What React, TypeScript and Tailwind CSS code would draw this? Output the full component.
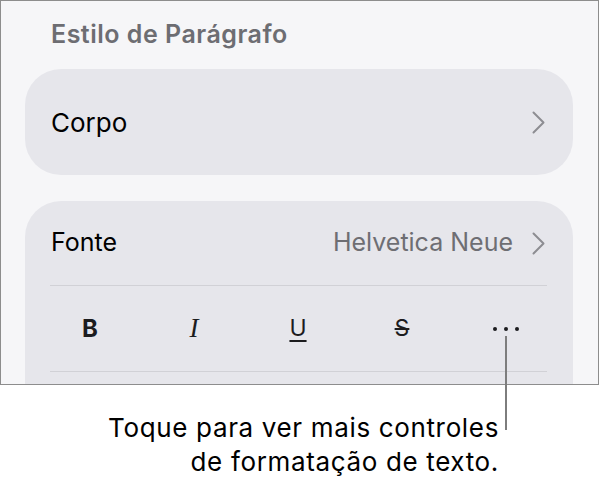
import React from "react";

const Chevron = () => (
  <svg width="13" height="23" viewBox="0 0 13 23" fill="none" className="shrink-0">
    <path d="M1.5 1.5 L11.5 11.5 L1.5 21.5" stroke="#8d8d92" strokeWidth="2" strokeLinecap="round" strokeLinejoin="round" />
  </svg>
);

const StyleButton = ({ children }: { children: React.ReactNode }) => (
  <div className="w-[104px] h-full flex items-center justify-center">{children}</div>
);

const App = () => {
  return (
    <div className="relative w-[599px] h-[481px] bg-white font-['Inter','Liberation_Sans',sans-serif]">
      <div className="h-[385px] border border-[#8d8d8d] bg-[#f6f6f8] overflow-hidden pl-[24px] pr-[25px]">
        <h2 className="mt-[21px] pl-[26px] text-[25px] leading-[25px] tracking-[0.5px] font-semibold text-[#6d6d72]">
          Estilo de Parágrafo
        </h2>

        <div className="mt-[22px] h-[106px] rounded-[36px] bg-[#e6e6eb] flex items-center justify-between pl-[26px] pr-[28px]">
          <span className="text-[26px] text-black">Corpo</span>
          <Chevron />
        </div>

        <div className="mt-[26px] h-[240px] rounded-[36px] bg-[#e6e6eb]">
          <div className="h-[84px] flex items-center pl-[26px] pr-[28px]">
            <span className="text-[25px] text-black flex-1">Fonte</span>
            <span className="text-[25px] text-[#6e6e73] mr-[19px]">Helvetica Neue</span>
            <Chevron />
          </div>
          <div className="ml-[25px] mr-[26px] h-px bg-[#d1d1d6]" />
          <div className="h-[85px] flex items-center pl-[13px]">
            <StyleButton>
              <span className="text-[24px] font-bold text-[#1c1c1e]">B</span>
            </StyleButton>
            <StyleButton>
              <span className="text-[27px] italic font-['Liberation_Serif',serif] text-[#1c1c1e]">I</span>
            </StyleButton>
            <StyleButton>
              <span className="text-[23px] underline underline-offset-[4px] decoration-[1.5px] text-[#1c1c1e]">U</span>
            </StyleButton>
            <StyleButton>
              <span className="text-[23px] line-through decoration-[1.5px] text-[#1c1c1e]">S</span>
            </StyleButton>
            <StyleButton>
              <div className="flex gap-[7px]">
                <span className="w-[4px] h-[4px] rounded-full bg-[#1c1c1e]" />
                <span className="w-[4px] h-[4px] rounded-full bg-[#1c1c1e]" />
                <span className="w-[4px] h-[4px] rounded-full bg-[#1c1c1e]" />
              </div>
            </StyleButton>
          </div>
          <div className="ml-[25px] mr-[26px] h-px bg-[#d1d1d6]" />
        </div>
      </div>

      <p className="mt-[26px] pr-[100px] text-right text-[26px] leading-[34px] tracking-[0.65px] text-black">
        Toque para ver mais controles
        <br />
        de formatação de texto.
      </p>

      <div className="absolute left-[505px] top-[336px] w-[1.5px] h-[94px] bg-[#7d7d7d]" />
    </div>
  );
};

export default App;
